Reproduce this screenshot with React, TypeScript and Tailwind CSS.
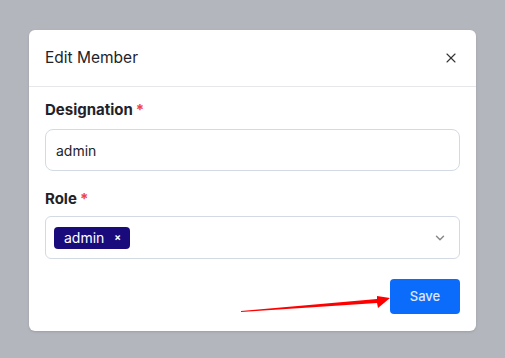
import { X, ChevronDown } from "lucide-react";

export default function App() {
    return (
        <div
            className="flex h-[358px] w-[505px] justify-center bg-[#b3b6bd] pt-[30px]"
            style={{ fontFamily: "Inter, 'Noto Sans', sans-serif" }}
        >
            <div className="relative h-[301px] w-[447px] rounded-md bg-white shadow">
                {/* Header */}
                <div className="flex h-[57px] items-center justify-between border-b border-[#e5e7eb] pl-4 pr-[17px]">
                    <span className="text-[15.5px] text-[#1f2329]">Edit Member</span>
                    <X size={16} strokeWidth={1.6} className="text-[#333]" />
                </div>

                {/* Body */}
                <div className="px-4 pt-[12px]">
                    <div className="flex items-center text-[15px] font-bold leading-[22px] text-[#1f2329]">
                        Designation<span className="ml-[3px] text-[#ef4444]">*</span>
                    </div>
                    <div className="mt-[8px] flex h-[42px] items-center rounded-lg border border-[#d4dae3] px-[10px] text-[14px] text-[#1f2329]">
                        admin
                    </div>

                    <div className="mt-[17px] flex items-center text-[15px] font-bold leading-[22px] text-[#1f2329]">
                        Role<span className="ml-[3px] text-[#ef4444]">*</span>
                    </div>
                    <div className="mt-[6px] flex h-[43px] items-center justify-between rounded-md border border-[#d4dae3] pl-2 pr-[12px]">
                        <span className="flex h-[22px] items-center gap-[10px] rounded bg-[#1a0b7d] pl-[10px] pr-[9px] text-[14px] text-white">
                            admin
                            <span className="text-[10px] font-bold">×</span>
                        </span>
                        <ChevronDown size={14} strokeWidth={2.5} className="text-[#888]" />
                    </div>

                    <div className="mt-[20px] flex justify-end">
                        <button className="h-[35px] w-[70px] rounded bg-[#0b6cfb] text-[13px] font-medium text-[#dbe7ff]">
                            Save
                        </button>
                    </div>
                </div>

                {/* annotation arrow */}
                <svg className="absolute left-[210px] top-[258px]" width="155" height="30" viewBox="0 0 155 30">
                    <polygon points="2,23 138,11 138,8 151,10 139,20 138,15 2,24" fill="#f00" />
                </svg>
            </div>
        </div>
    );
}
